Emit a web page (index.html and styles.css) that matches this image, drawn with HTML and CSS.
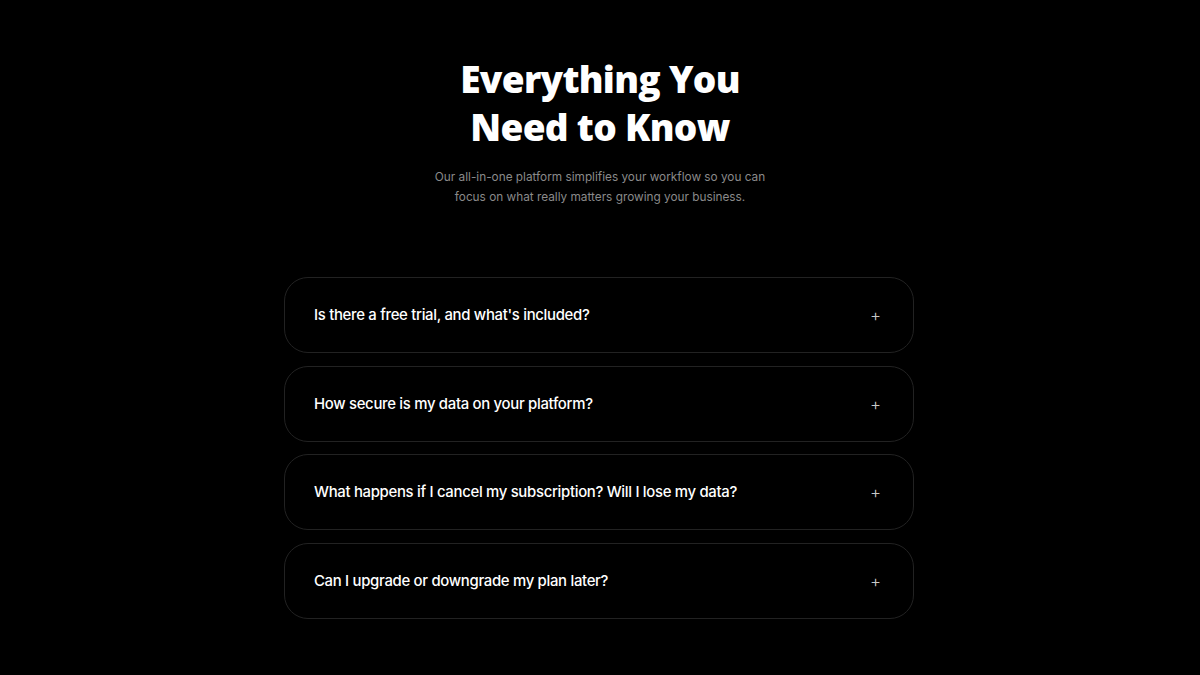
FILE: index.html
```html
<!DOCTYPE html>
<html>
<head>
<meta charset="utf-8">
<link rel="stylesheet" href="styles.css">
</head>
<body>
<section class="faq">
  <h1 class="title">Everything You<br>Need to Know</h1>
  <p class="subtitle">Our all-in-one platform simplifies your workflow so you can<br>focus on what really matters growing your business.</p>
  <div class="list">
    <div class="item"><span class="q">Is there a free trial, and what's included?</span><span class="plus">+</span></div>
    <div class="item"><span class="q">How secure is my data on your platform?</span><span class="plus">+</span></div>
    <div class="item"><span class="q">What happens if I cancel my subscription? Will I lose my data?</span><span class="plus">+</span></div>
    <div class="item"><span class="q">Can I upgrade or downgrade my plan later?</span><span class="plus">+</span></div>
  </div>
</section>
</body>
</html>
```
FILE: styles.css
```css
html, body {
  margin: 0;
  padding: 0;
  background: #000;
}
body {
  width: 1200px;
  height: 675px;
  overflow: hidden;
  font-family: Inter, "Noto Sans", sans-serif;
  color: #fff;
}
.faq {
  display: flex;
  flex-direction: column;
  align-items: center;
  padding-top: 55px;
}
.title {
  margin: 0;
  font-family: "Open Sans", sans-serif;
  font-weight: 800;
  font-size: 37px;
  line-height: 48px;
  text-align: center;
  letter-spacing: -0.7px;
}
.subtitle {
  margin: 16px 0 0;
  font-size: 11.8px;
  line-height: 20px;
  color: #8a8a8a;
  text-align: center;
}
.list {
  margin-top: 70px;
  width: 630px;
  margin-left: -2px;
  display: flex;
  flex-direction: column;
  gap: 12.7px;
}
.item {
  height: 76px;
  box-sizing: border-box;
  border: 1px solid #222;
  border-radius: 24px;
  background: #000;
  display: flex;
  align-items: center;
  justify-content: space-between;
  padding: 0 32px 0 29px;
}
.q {
  font-size: 14.9px;
  font-weight: 500;
  color: #fff;
  letter-spacing: -0.3px;
}
.plus {
  font-size: 17px;
  font-weight: 300;
  color: #c8c8c8;
}
```
